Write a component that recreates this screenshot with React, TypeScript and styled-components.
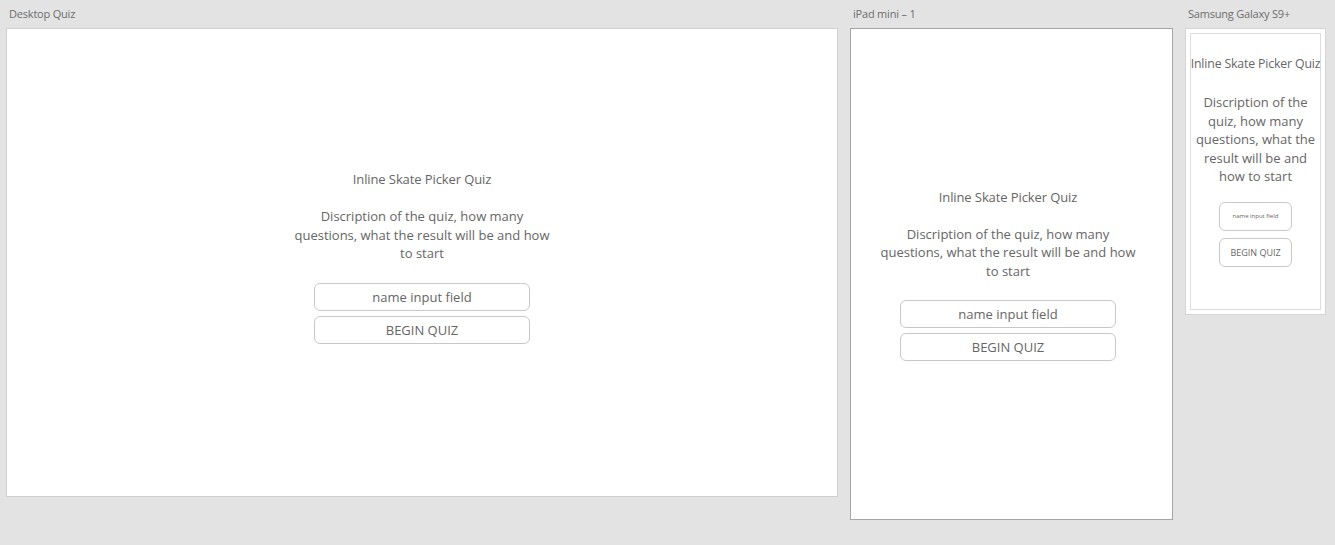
import styled, { createGlobalStyle } from 'styled-components';

const GlobalStyle = createGlobalStyle`
  html, body {
    margin: 0;
    padding: 0;
    background: #e3e3e3;
  }
  body {
    font-family: 'Open Sans', 'Liberation Sans', sans-serif;
    color: #666;
  }
`;

type Size = 'large' | 'small';

function QuizIntro({ $size }: { $size: Size }) {
  return (
    <IntroContainer $size={$size}>
      <QuizTitle $size={$size}>Inline Skate Picker Quiz</QuizTitle>
      <QuizDescription $size={$size}>
        Discription of the quiz, how many questions, what the result will be and how to start
      </QuizDescription>
      <ActionStack $size={$size}>
        <NameField $size={$size}>name input field</NameField>
        <BeginButton $size={$size}>BEGIN QUIZ</BeginButton>
      </ActionStack>
    </IntroContainer>
  );
}

function App() {
  return (
    <>
      <GlobalStyle />
      <Canvas>
        <Artboard>
          <ArtboardLabel>Desktop Quiz</ArtboardLabel>
          <DesktopFrame>
            <QuizIntro $size="large" />
          </DesktopFrame>
        </Artboard>
        <Artboard>
          <ArtboardLabel>iPad mini – 1</ArtboardLabel>
          <TabletFrame>
            <QuizIntro $size="large" />
          </TabletFrame>
        </Artboard>
        <Artboard>
          <ArtboardLabel>Samsung Galaxy S9+</ArtboardLabel>
          <PhoneFrame>
            <PhoneScreen>
              <QuizIntro $size="small" />
            </PhoneScreen>
          </PhoneFrame>
        </Artboard>
      </Canvas>
    </>
  );
}

export default App;

const Canvas = styled.div`
  display: flex;
  align-items: flex-start;
  gap: 12px;
  padding-left: 6px;
  width: 1335px;
  height: 545px;
  box-sizing: border-box;
`;

const Artboard = styled.div`
  display: flex;
  flex-direction: column;
`;

const ArtboardLabel = styled.div`
  height: 28px;
  line-height: 28px;
  padding-left: 3px;
  font-size: 11px;
  color: #6e6e6e;
  letter-spacing: -0.2px;
`;

const DesktopFrame = styled.div`
  width: 832px;
  height: 469px;
  box-sizing: border-box;
  background: #fff;
  border: 1px solid #cfcfcf;
  padding-bottom: 12px;
  display: flex;
  align-items: center;
  justify-content: center;
`;

const TabletFrame = styled.div`
  width: 323px;
  height: 492px;
  box-sizing: border-box;
  background: #fff;
  border: 1px solid #a5a5a5;
  padding-right: 7px;
  display: flex;
  align-items: center;
  justify-content: center;
`;

const PhoneFrame = styled.div`
  width: 141px;
  height: 287px;
  box-sizing: border-box;
  background: #fff;
  border: 1px solid #d4d4d4;
  padding: 4px;
`;

const PhoneScreen = styled.div`
  height: 100%;
  box-sizing: border-box;
  border: 1px solid #dcdcdc;
  display: flex;
  justify-content: center;
  padding-top: 20px;
`;

const IntroContainer = styled.div<{ $size: Size }>`
  display: flex;
  flex-direction: column;
  align-items: center;
  width: ${(p) => (p.$size === 'large' ? '262px' : '131px')};
`;

const QuizTitle = styled.h1<{ $size: Size }>`
  margin: 0;
  font-weight: 400;
  white-space: nowrap;
  font-size: ${(p) => (p.$size === 'large' ? '13px' : '12.3px')};
  line-height: 20px;
  letter-spacing: ${(p) => (p.$size === 'large' ? '-0.1px' : '-0.15px')};
  color: #666;
`;

const QuizDescription = styled.p<{ $size: Size }>`
  margin: ${(p) => (p.$size === 'large' ? '18px 0 0' : '19px 0 0')};
  padding: 0 ${(p) => (p.$size === 'large' ? '0' : '4px')};
  text-align: center;
  font-size: 13px;
  line-height: 18.5px;
  color: #666;
`;

const ActionStack = styled.div<{ $size: Size }>`
  display: flex;
  flex-direction: column;
  gap: ${(p) => (p.$size === 'large' ? '5px' : '7px')};
  margin-top: ${(p) => (p.$size === 'large' ? '20px' : '16px')};
`;

const FieldBox = styled.div<{ $size: Size }>`
  width: ${(p) => (p.$size === 'large' ? '216px' : '73px')};
  height: ${(p) => (p.$size === 'large' ? '28px' : '29px')};
  box-sizing: border-box;
  border: 1px solid #c8c8c8;
  border-radius: 6px;
  display: flex;
  align-items: center;
  justify-content: center;
  color: #666;
  background: #fff;
`;

const NameField = styled(FieldBox)`
  font-size: ${(p) => (p.$size === 'large' ? '13px' : '6px')};
`;

const BeginButton = styled(FieldBox)`
  font-size: ${(p) => (p.$size === 'large' ? '13px' : '9px')};
`;
